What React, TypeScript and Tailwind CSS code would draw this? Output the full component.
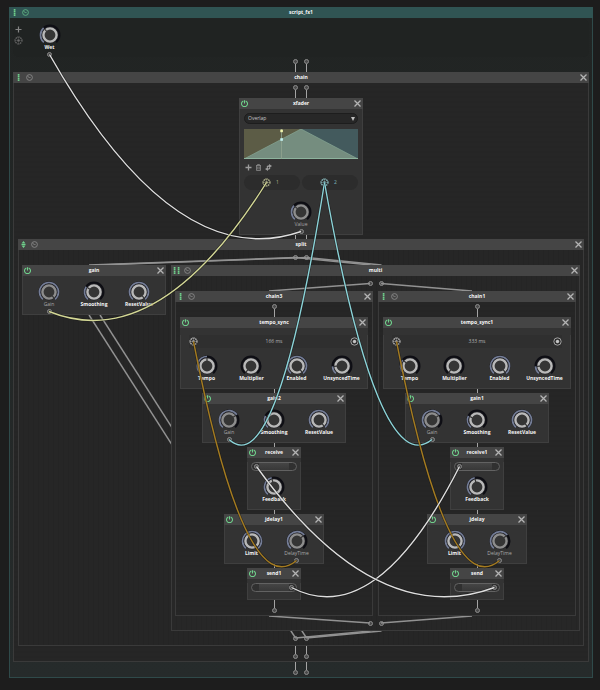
import React, { useLayoutEffect, useRef, useState } from "react";

/* ---------- wires ---------- */

type Anchor = { id: string; ax?: number; ay?: number; dx?: number };
type Link = { from: Anchor; to: Anchor; color: string; cable?: boolean };

const SAG = 44;

function Wires({ links, className }: { links: Link[]; className: string }) {
  const ref = useRef<SVGSVGElement>(null);
  const [paths, setPaths] = useState<string[]>([]);

  useLayoutEffect(() => {
    const measure = () => {
      const svg = ref.current;
      if (!svg) return;
      const base = svg.getBoundingClientRect();
      const point = (a: Anchor) => {
        const el = document.getElementById(a.id);
        if (!el) return { x: 0, y: 0 };
        const r = el.getBoundingClientRect();
        return {
          x: r.left - base.left + r.width * (a.ax ?? 0.5) + (a.dx ?? 0),
          y: r.top - base.top + r.height * (a.ay ?? 0.5),
        };
      };
      setPaths(
        links.map((l) => {
          const p = point(l.from);
          const q = point(l.to);
          return l.cable
            ? `M${p.x} ${p.y} Q${(p.x + q.x) / 2} ${Math.max(p.y, q.y) + SAG} ${q.x} ${q.y}`
            : `M${p.x} ${p.y} L${q.x} ${q.y}`;
        }),
      );
    };
    measure();
    const observer = new ResizeObserver(measure);
    observer.observe(document.body);
    return () => observer.disconnect();
  }, [links]);

  return (
    <svg ref={ref} className={className} fill="none" aria-hidden="true">
      {links.map((l, i) => (
        <g key={i}>
          {l.cable && <path d={paths[i]} stroke="#111" strokeOpacity="0.5" strokeWidth="2.6" />}
          <path d={paths[i]} stroke={l.color} strokeWidth="1.4" />
        </g>
      ))}
    </svg>
  );
}

const GREY = "#929292";
const WHITE = "#dedede";
const YELLOW = "#d3d795";
const CYAN = "#8bd3d8";
const GOLD = "#a47b20";

const cables: Link[] = [
  { from: { id: "wet" }, to: { id: "xfader-value" }, color: WHITE, cable: true },
  { from: { id: "xf-1" }, to: { id: "gain-gain" }, color: YELLOW, cable: true },
  { from: { id: "xf-2" }, to: { id: "gain2-gain" }, color: CYAN, cable: true },
  { from: { id: "xf-2" }, to: { id: "gain1-gain" }, color: CYAN, cable: true },
  { from: { id: "sync-a" }, to: { id: "delay-a" }, color: GOLD, cable: true },
  { from: { id: "sync-b" }, to: { id: "delay-b" }, color: GOLD, cable: true },
  { from: { id: "send-a" }, to: { id: "receive-b" }, color: WHITE, cable: true },
  { from: { id: "send-b" }, to: { id: "receive-a" }, color: WHITE, cable: true },
];

const splitLinks: Link[] = [
  { from: { id: "split-in-0" }, to: { id: "gain", ay: 0, dx: -5 }, color: GREY },
  { from: { id: "split-in-1" }, to: { id: "gain", ay: 0, dx: 6 }, color: GREY },
  { from: { id: "split-in-0" }, to: { id: "multi", ay: 0, dx: -5 }, color: GREY },
  { from: { id: "split-in-1" }, to: { id: "multi", ay: 0, dx: 6 }, color: GREY },
  { from: { id: "gain", ay: 1, dx: -5 }, to: { id: "split-out-0" }, color: GREY },
  { from: { id: "gain", ay: 1, dx: 6 }, to: { id: "split-out-1" }, color: GREY },
  { from: { id: "multi", ay: 1, dx: -5 }, to: { id: "split-out-0" }, color: GREY },
  { from: { id: "multi", ay: 1, dx: 6 }, to: { id: "split-out-1" }, color: GREY },
];

const multiLinks: Link[] = [
  { from: { id: "multi-in-0" }, to: { id: "chain3", ay: 0, dx: -5 }, color: GREY },
  { from: { id: "multi-in-1" }, to: { id: "chain1", ay: 0, dx: -5 }, color: GREY },
  { from: { id: "chain3", ay: 1, dx: -5 }, to: { id: "multi-out-0" }, color: GREY },
  { from: { id: "chain1", ay: 1, dx: -5 }, to: { id: "multi-out-1" }, color: GREY },
];

/* ---------- small drawings ---------- */

const Port = ({ id }: { id?: string }) => (
  <span id={id} className="block size-[5px] shrink-0 rounded-full border border-[#8c8c8c] bg-[#4a4a4a]" />
);

const PowerIcon = () => (
  <svg viewBox="0 0 14 14" className="size-[7px]" fill="none" stroke="#6fd08b" strokeWidth="2.2">
    <path d="M4.6 1.8A6 6 0 1 0 9.4 1.8" />
    <path d="M7 0.5V7" />
  </svg>
);

const CloseIcon = () => (
  <svg viewBox="0 0 14 14" className="size-[7px]" fill="none" stroke="#b4b4b4" strokeWidth="2.6">
    <path d="M1 1L13 13M13 1L1 13" />
  </svg>
);

const BypassIcon = ({ color }: { color: string }) => (
  <svg viewBox="0 0 14 14" className="size-[7px]" fill="none" stroke={color} strokeWidth="1.7">
    <circle cx="7" cy="7" r="5.8" />
    <path d="M7 7L3.4 5" />
    <path d="M7 7h2" />
  </svg>
);

const TargetIcon = ({ id, color }: { id?: string; color: string }) => (
  <svg id={id} viewBox="0 0 18 18" className="size-[9px] shrink-0" fill="none" stroke={color}>
    <circle cx="9" cy="9" r="7.2" strokeWidth="1.8" strokeDasharray="3.6 2.05" />
    <circle cx="9" cy="9" r="2.6" fill={color} stroke="none" />
    <path d="M9 1V5M9 13V17M1 9H5M13 9H17M3.5 3.5L6 6M12 12L14.5 14.5M14.5 3.5L12 6M6 12L3.5 14.5" strokeWidth="1.3" />
  </svg>
);

type Kind = "chain" | "split" | "multi";

const KindIcon = ({ kind }: { kind: Kind }) => (
  <svg viewBox="0 0 14 14" className="size-[7px]" fill="#6fd08b">
    {kind === "chain" && <path d="M5.5 0h3.4v3h-3.4zM5.5 3.7h3.4v3h-3.4zM5.5 7.4h3.4v3h-3.4zM5.5 11h3.4v3h-3.4z" />}
    {kind === "split" && <path d="M7 0L11 5H3zM7 14L3 9H11zM3 6H11V8H3z" />}
    {kind === "multi" && (
      <path d="M1.5 0h3.4v3h-3.4zM1.5 3.7h3.4v3h-3.4zM1.5 7.4h3.4v3h-3.4zM1.5 11h3.4v3h-3.4zM9.5 0h3.4v3h-3.4zM9.5 3.7h3.4v3h-3.4zM9.5 7.4h3.4v3h-3.4zM9.5 11h3.4v3h-3.4z" />
    )}
  </svg>
);

/* ---------- knob ---------- */

const START = 220;
const SWEEP = 280;

function polar(r: number, deg: number) {
  const a = ((deg - 90) * Math.PI) / 180;
  return `${(11 + r * Math.cos(a)).toFixed(2)} ${(11 + r * Math.sin(a)).toFixed(2)}`;
}

function arc(r: number, value: number) {
  const large = SWEEP * value > 180 ? 1 : 0;
  return `M${polar(r, START)} A${r} ${r} 0 ${large} 1 ${polar(r, START + SWEEP * value)}`;
}

type KnobProps = { label: string; value: number; port?: string };

function Knob({ label, value, port }: KnobProps) {
  const driven = Boolean(port) && port !== "wet";
  const angle = START + SWEEP * value;
  return (
    <div className="flex w-[45px] flex-col items-center pt-[5px]">
      <label className="relative flex flex-col items-center">
        <svg viewBox="0 0 22 22" className="size-[22px]" fill="none">
          <path d={arc(9.3, 1)} stroke="#0e0e14" strokeWidth="2.4" />
          <circle cx="11" cy="11" r="8.4" fill="#202024" />
          {value > 0 && <path d={arc(9.5, value)} stroke="#747d96" strokeWidth="1.7" />}
          <circle cx="11" cy="11" r="6.6" fill="#353535" stroke={driven ? "#8d8d8d" : "#b9b9b9"} strokeWidth="2.4" />
          <path d={`M${polar(5, angle)} L${polar(8, angle)}`} stroke="#333" strokeWidth="1.2" />
        </svg>
        <span
          className={`-mt-[2px] block h-[7px] text-[5px] leading-[7px] whitespace-nowrap ${
            driven ? "font-medium text-[#a8a8a8]" : "font-bold text-[#f6f6f6]"
          }`}
        >
          {label}
        </span>
        <input
          type="range"
          min={0}
          max={1}
          step={0.01}
          defaultValue={value}
          className="absolute inset-0 size-full cursor-pointer opacity-0"
        />
      </label>
      <div className="mt-px flex h-[5px]">{port && <Port id={port} />}</div>
    </div>
  );
}

/* ---------- frames ---------- */

const Title = ({ children }: { children: React.ReactNode }) => (
  <h2 className="text-[5px] leading-[11px] font-bold text-[#f6f6f6]">{children}</h2>
);

const Close = ({ name }: { name: string }) => (
  <button type="button" aria-label={`Remove ${name}`} className="flex justify-self-end">
    <CloseIcon />
  </button>
);

type NodeProps = { id: string; title: string; width?: string; children: React.ReactNode };

function Node({ id, title, width = "", children }: NodeProps) {
  return (
    <section id={id} className={`relative border-b border-[#3f3f3f] bg-[#333] ${width}`}>
      <header className="grid h-[11px] grid-cols-[1fr_auto_1fr] items-center bg-[#454545] px-[2px]">
        <button type="button" aria-label={`Bypass ${title}`} className="flex justify-self-start">
          <PowerIcon />
        </button>
        <Title>{title}</Title>
        <Close name={title} />
      </header>
      <div className="border-x border-[#3f3f3f]">{children}</div>
    </section>
  );
}

const STRIPES = {
  chain: "bg-[repeating-linear-gradient(180deg,#262626_0px,#262626_3px,#252525_3px,#252525_5px)]",
  split: "bg-[repeating-linear-gradient(90deg,#262626_0px,#262626_4px,#242424_4px,#242424_5px)]",
  multi: "bg-[repeating-linear-gradient(90deg,#272727_0px,#272727_4px,#252525_4px,#252525_5px)]",
};

type NetworkProps = {
  id: string;
  title: string;
  kind: Kind;
  root?: boolean;
  className?: string;
  body?: string;
  children: React.ReactNode;
};

function Network({ id, title, kind, root, className = "", body = "", children }: NetworkProps) {
  return (
    <section
      id={id}
      className={`relative border-b ${root ? "border-[#2f4a4a]" : "border-[#3a3a3a]"} ${className}`}
    >
      <header
        className={`grid h-[11px] grid-cols-[1fr_auto_1fr] items-center px-[2px] ${
          root ? "bg-[#305453]" : "bg-[#454545]"
        }`}
      >
        <div className="flex gap-1">
          <KindIcon kind={kind} />
          <button type="button" aria-label={`Bypass ${title}`} className="flex">
            <BypassIcon color={root ? "#62b985" : "#8c8c8c"} />
          </button>
        </div>
        <Title>{title}</Title>
        {root ? <span /> : <Close name={title} />}
      </header>
      <div
        className={`relative border-x ${
          root ? "border-[#2f4a4a] bg-linear-to-b from-[#212423] to-[#262b2b]" : `border-[#3a3a3a] ${STRIPES[kind]}`
        } ${body}`}
      >
        {children}
      </div>
    </section>
  );
}

const Line = ({ size }: { size: string }) => <span className={`block w-px bg-[#a4a4a4] ${size}`} />;

/* channel inputs: port on top, line down into the next node */
const Inputs = ({ count = 2 }: { count?: number }) => (
  <div className="flex justify-center gap-[6px] pt-[2px]">
    {Array.from({ length: count }, (_, i) => (
      <div key={i} className="flex flex-col items-center">
        <Port />
        <Line size="h-2" />
      </div>
    ))}
  </div>
);

const Outputs = ({ count = 2 }: { count?: number }) => (
  <div className="flex justify-center gap-[6px] pb-[2px]">
    {Array.from({ length: count }, (_, i) => (
      <div key={i} className="flex flex-col items-center">
        <Line size="h-2" />
        <Port />
      </div>
    ))}
  </div>
);

const Joint = ({ count = 1 }: { count?: number }) => (
  <div className="flex justify-center gap-[10px]">
    {Array.from({ length: count }, (_, i) => (
      <Line key={i} size="h-1" />
    ))}
  </div>
);

const PortPair = ({ name, height }: { name: string; height: string }) => (
  <div className={`flex items-center justify-center gap-[6px] ${height}`}>
    <Port id={`${name}-0`} />
    <Port id={`${name}-1`} />
  </div>
);

/* ---------- node bodies ---------- */

function XFader() {
  return (
    <Node id="xfader" title="xfader" width="w-[124px]">
      <div className="flex flex-col px-1 pt-1">
        <div className="grid">
          <select
            aria-label="Fade mode"
            defaultValue="Overlap"
            className="col-start-1 row-start-1 h-[11px] appearance-none rounded-full border border-[#1d1d1d] bg-[#272727] px-[3px] text-[5px] leading-[9px] font-medium text-[#c4c4c4]"
          >
            <option>Overlap</option>
            <option>Linear</option>
            <option>Switch</option>
          </select>
          <svg
            viewBox="0 0 8 8"
            className="pointer-events-none z-10 col-start-1 row-start-1 mr-[3px] size-1 self-center justify-self-end"
            fill="#c0c0c0"
          >
            <path d="M0 0H8L4 8z" />
          </svg>
        </div>
        <svg viewBox="0 0 114 30" preserveAspectRatio="none" className="mt-[5px] h-[30px] w-full">
          <path d="M0 0H57V30H0z" fill="#5c5c46" />
          <path d="M57 0H114V30H57z" fill="#435a5d" />
          <path d="M0 30L57 0L114 30z" fill="#758d7f" />
          <path d="M0 30L57 0L114 30" stroke="#87a795" strokeWidth="0.7" fill="none" />
          <path d="M0 29.5H114" stroke="#8db39d" strokeWidth="1" />
          <path d="M37.5 0V30" stroke="#91a38f" strokeWidth="0.8" />
          <path d="M36.3 0.6h2.6v2.6h-2.6z" fill="#f1f4ae" />
          <path d="M36.3 9.2h2.6v2.6h-2.6z" fill="#c4f3f3" />
        </svg>
        <div className="mt-1 flex h-2 items-center gap-[3px] pl-px">
          <button type="button" aria-label="Add output" className="flex">
            <svg viewBox="0 0 14 14" className="size-[7px]" stroke="#9c9c9c" strokeWidth="2.6" fill="none">
              <path d="M7 1V13M1 7H13" />
            </svg>
          </button>
          <button type="button" aria-label="Delete output" className="flex">
            <svg viewBox="0 0 14 14" className="size-[7px]" stroke="#8c8c8c" strokeWidth="1.6" fill="none">
              <path d="M2 3H12M5 3V1H9V3M3 3V13H11V3M5.6 5V11M8.4 5V11" />
            </svg>
          </button>
          <button type="button" aria-label="Drag output" className="flex">
            <svg viewBox="0 0 14 14" className="size-[7px]" fill="#9c9c9c">
              <path d="M8 0L14 4L8 8V5.4C6.4 5.4 6 6 5.6 7.4L3 6.6C3.6 4 5.2 2.6 8 2.6zM6 6.4L0 10L6 14V11.6C8.8 11.4 10.4 10 11 7.6L8.4 7C8 8.4 7.4 9 6 9z" />
            </svg>
          </button>
        </div>
        <div className="mt-1 grid grid-cols-2 gap-[2px]">
          <div className="flex h-[15px] items-center gap-1 rounded-full bg-[#2c2c2c] pl-[18px] text-[5px] text-[#b4b48a]">
            <TargetIcon id="xf-1" color="#c4c69a" />
            <span className="pl-px">1</span>
          </div>
          <div className="flex h-[15px] items-center gap-1 rounded-full bg-[#2c2c2c] pl-[18px] text-[5px] text-[#7fbabf]">
            <TargetIcon id="xf-2" color="#96cfd3" />
            <span className="pl-px">2</span>
          </div>
        </div>
        <div className="mt-[6px] flex justify-center">
          <Knob label="Value" value={0.33} port="xfader-value" />
        </div>
      </div>
    </Node>
  );
}

function Gain({ id, gain, smoothing }: { id: string; gain: number; smoothing: number }) {
  return (
    <Node id={id} title={id} width="w-[144px] shrink-0">
      <div className="flex justify-center">
        <Knob label="Gain" value={gain} port={`${id}-gain`} />
        <Knob label="Smoothing" value={smoothing} />
        <Knob label="ResetValue" value={1} />
      </div>
    </Node>
  );
}

function TempoSync({ id, time, tempo, port }: { id: string; time: string; tempo: number; port: string }) {
  return (
    <Node id={id} title={id} width="w-full">
      <div className="mx-2 mt-[7px] mb-[2px] grid h-[13px] grid-cols-[1fr_auto_1fr] items-center bg-[#2f2f2f]">
        <TargetIcon id={port} color="#c4c4c4" />
        <output className="text-[5px] leading-[13px] font-medium text-[#b4b4b4]">{time}</output>
        <svg viewBox="0 0 18 18" className="size-[9px] justify-self-end" fill="none">
          <circle cx="9" cy="9" r="7.4" stroke="#adadad" strokeWidth="1.8" />
          <circle cx="9" cy="9" r="3.4" fill="#c4c4c4" />
        </svg>
      </div>
      <div className="flex justify-center">
        <Knob label="Tempo" value={tempo} />
        <Knob label="Multiplier" value={0} />
        <Knob label="Enabled" value={1} />
        <Knob label="UnsyncedTime" value={0.17} />
      </div>
    </Node>
  );
}

function Slot({ port, side }: { port: string; side: "left" | "right" }) {
  return (
    <div className="mx-[3px] mt-1 flex h-[9px] items-center rounded-full border border-[#626262] bg-[#303030] px-[2px]">
      <span className="flex w-[5px]">{side === "left" && <Port id={port} />}</span>
      <span className="h-[7px] flex-1 bg-linear-to-b from-[#454545] to-[#383838]" />
      <span className="flex w-[5px]">{side === "right" && <Port id={port} />}</span>
    </div>
  );
}

type LaneProps = {
  id: string;
  lane: "a" | "b";
  names: { sync: string; gain: string; receive: string; delay: string; send: string };
  time: string;
  tempo: number;
};

function Lane({ id, lane, names, time, tempo }: LaneProps) {
  return (
    <Network id={id} title={id} kind="chain" className="min-w-0 flex-1" body="px-1">
      <Inputs count={1} />
      <div className="flex flex-col items-center">
        <TempoSync id={names.sync} time={time} tempo={tempo} port={`sync-${lane}`} />
        <Joint />
        <Gain id={names.gain} gain={0.7} smoothing={0.27} />
        <Joint />
        <Node id={names.receive} title={names.receive} width="w-[54px]">
          <Slot port={`receive-${lane}`} side="left" />
          <div className="flex justify-center">
            <Knob label="Feedback" value={0.45} />
          </div>
        </Node>
        <Joint />
        <Node id={names.delay} title={names.delay} width="w-[100px]">
          <div className="flex justify-center">
            <Knob label="Limit" value={1} />
            <Knob label="DelayTime" value={0.68} port={`delay-${lane}`} />
          </div>
        </Node>
        <Joint />
        <Node id={names.send} title={names.send} width="w-[54px]">
          <div className="pb-[7px]">
            <Slot port={`send-${lane}`} side="right" />
          </div>
        </Node>
      </div>
      <Outputs count={1} />
    </Network>
  );
}

/* ---------- page ---------- */

export default function App() {
  return (
    <main className="relative min-h-screen min-w-[600px] bg-[#1d1d1d] pt-[7px] pr-[7px] pb-3 pl-[9px] font-['Open_Sans','Noto_Sans',sans-serif]">
      <Network id="script_fx1" title="script_fx1" kind="chain" root body="px-[3px]">
        <div className="pt-px">
          <div className="flex rounded-md bg-[#202322]">
            <div className="flex flex-col gap-[3px] pt-[7px] pl-px">
              <button type="button" aria-label="Add parameter" className="flex pl-px">
                <svg viewBox="0 0 14 14" className="size-[7px]" stroke="#858585" strokeWidth="2.4" fill="none">
                  <path d="M7 1V13M1 7H13" />
                </svg>
              </button>
              <button type="button" aria-label="Drag parameter" className="flex">
                <TargetIcon color="#6a6a6a" />
              </button>
            </div>
            <div className="pl-1">
              <Knob label="Wet" value={0.35} port="wet" />
            </div>
          </div>
        </div>
        <Inputs />
        <Network id="chain" title="chain" kind="chain" body="px-1">
          <Inputs />
          <div className="flex flex-col items-center">
            <XFader />
          </div>
          <Joint count={2} />
          <Network id="split" title="split" kind="split" body="px-[3px]">
            <Wires links={splitLinks} className="absolute inset-0 size-full" />
            <PortPair name="split-in" height="h-[15px]" />
            <div className="relative flex items-start gap-[5px]">
              <Gain id="gain" gain={1} smoothing={0.3} />
              <Network id="multi" title="multi" kind="multi" className="min-w-0 flex-1" body="px-[3px]">
                <Wires links={multiLinks} className="absolute inset-0 size-full" />
                <PortPair name="multi-in" height="h-[15px]" />
                <div className="relative flex gap-[5px]">
                  <Lane
                    id="chain3"
                    lane="a"
                    time="166 ms"
                    tempo={0.5}
                    names={{ sync: "tempo_sync", gain: "gain2", receive: "receive", delay: "jdelay1", send: "send1" }}
                  />
                  <Lane
                    id="chain1"
                    lane="b"
                    time="333 ms"
                    tempo={0.32}
                    names={{ sync: "tempo_sync1", gain: "gain1", receive: "receive1", delay: "jdelay", send: "send" }}
                  />
                </div>
                <PortPair name="multi-out" height="h-[14px]" />
              </Network>
            </div>
            <PortPair name="split-out" height="h-[14px]" />
          </Network>
          <Outputs />
        </Network>
        <Outputs />
      </Network>
      <Wires links={cables} className="pointer-events-none absolute inset-0 size-full" />
    </main>
  );
}
